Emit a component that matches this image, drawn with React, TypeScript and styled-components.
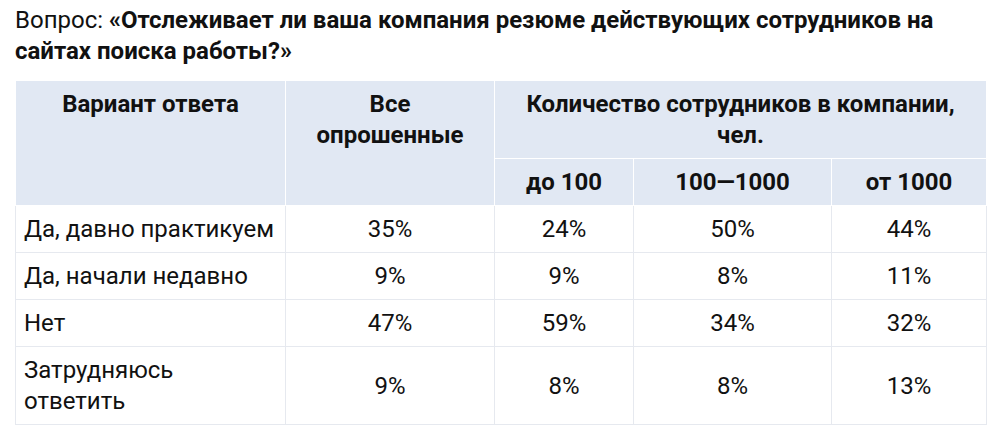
import React from "react";
import styled, { createGlobalStyle } from "styled-components";

const GlobalStyle = createGlobalStyle`
  html, body { margin: 0; padding: 0; background: #ffffff; }
  body { font-family: Roboto, "Liberation Sans", Arial, sans-serif; color: #111111; }
`;

const Page = styled.div`
  padding: 5px 15px 0 15px;
  width: 971px;
`;

const Title = styled.p`
  margin: 0 0 13px 0;
  font-size: 24px;
  line-height: 31px;
  font-weight: 400;
  color: #111111;
  strong { font-weight: 700; }
`;

const Table = styled.table`
  width: 971px;
  border-collapse: collapse;
  table-layout: fixed;
  font-size: 24px;
  line-height: 31px;
  border: 1px solid #e6e9ef;
`;

const HeadCell = styled.th`
  background: #e1e8f3;
  font-weight: 700;
  text-align: center;
  vertical-align: top;
  padding: 8px 8px 7px;
  border: 1px solid #ffffff;
  color: #111111;
`;

const Cell = styled.td<{ $first?: boolean }>`
  text-align: ${(p) => (p.$first ? "left" : "center")};
  vertical-align: middle;
  padding: 8px 8px 7px;
  border: 1px solid #e6e9ef;
  color: #111111;
`;

const rows: [string, string[]][] = [
  ["Да, давно практикуем", ["35%", "24%", "50%", "44%"]],
  ["Да, начали недавно", ["9%", "9%", "8%", "11%"]],
  ["Нет", ["47%", "59%", "34%", "32%"]],
  ["Затрудняюсь ответить", ["9%", "8%", "8%", "13%"]],
];

export default function App() {
  return (
    <>
      <GlobalStyle />
      <Page>
        <Title>
          Вопрос: <strong>«Отслеживает ли ваша компания резюме действующих сотрудников на сайтах поиска работы?»</strong>
        </Title>
        <Table>
          <colgroup>
            <col style={{ width: 270 }} />
            <col style={{ width: 209 }} />
            <col style={{ width: 139 }} />
            <col style={{ width: 198 }} />
            <col style={{ width: 155 }} />
          </colgroup>
          <thead>
            <tr>
              <HeadCell rowSpan={2}>Вариант ответа</HeadCell>
              <HeadCell rowSpan={2}>Все опрошенные</HeadCell>
              <HeadCell colSpan={3}>Количество сотрудников в компании, чел.</HeadCell>
            </tr>
            <tr>
              <HeadCell>до 100</HeadCell>
              <HeadCell>100—1000</HeadCell>
              <HeadCell>от 1000</HeadCell>
            </tr>
          </thead>
          <tbody>
            {rows.map(([label, vals]) => (
              <tr key={label}>
                <Cell $first>{label}</Cell>
                {vals.map((v, i) => (
                  <Cell key={i}>{v}</Cell>
                ))}
              </tr>
            ))}
          </tbody>
        </Table>
      </Page>
    </>
  );
}
